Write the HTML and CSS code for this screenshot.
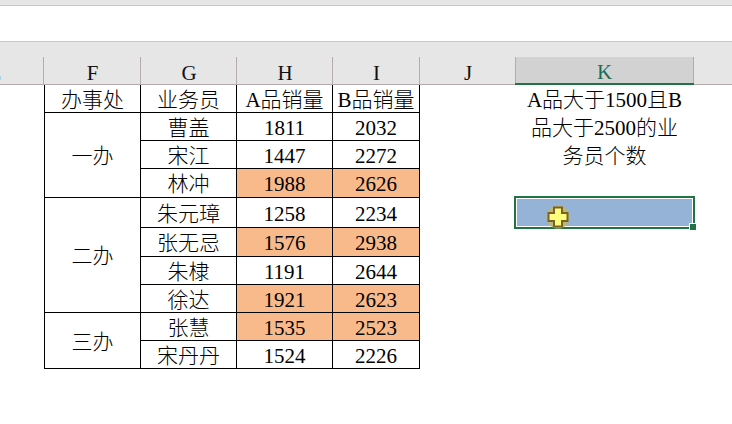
FILE: index.html
```html
<!DOCTYPE html>
<html lang="zh-CN">
<head>
<meta charset="utf-8">
<title>Sheet</title>
<link rel="stylesheet" href="styles.css">
</head>
<body>
<div class="topstrip"></div>
<div class="formula"></div>
<div class="sheet">
  <div class="hd hd-cut"><span>E</span></div>
  <div class="hd">F</div>
  <div class="hd">G</div>
  <div class="hd">H</div>
  <div class="hd">I</div>
  <div class="hd">J</div>
  <div class="hd hd-sel">K</div>
  <div class="hd-rest"></div>

  <div class="c cf">办事处</div><div class="c cg">业务员</div><div class="c ch">A品销量</div><div class="c ci">B品销量</div>
  <div class="note">A品大于1500且B<br>品大于2500的业<br>务员个数</div>

  <div class="c cf span3">一办</div><div class="c cg">曹盖</div><div class="c ch">1811</div><div class="c ci">2032</div>
  <div class="c cg">宋江</div><div class="c ch">1447</div><div class="c ci">2272</div>
  <div class="c cg">林冲</div><div class="c ch hi">1988</div><div class="c ci hi">2626</div>

  <div class="c cf span4">二办</div><div class="c cg">朱元璋</div><div class="c ch">1258</div><div class="c ci">2234</div>
  <div class="sel">
    <span class="handle"></span>
    <svg class="cursor" width="24" height="24" viewBox="0 0 24 24" aria-hidden="true">
      <circle cx="12" cy="12" r="11.5" fill="#bdb95f" fill-opacity=".9"/>
      <path d="M8 2.500h8v5.500h5.500v8h-5.500v5.500h-8v-5.500h-5.500v-8h5.500z" fill="#ffff7d" stroke="#7d5f2d" stroke-width="2"/>
    </svg>
  </div>
  <div class="c cg">张无忌</div><div class="c ch hi">1576</div><div class="c ci hi">2938</div>
  <div class="c cg">朱棣</div><div class="c ch">1191</div><div class="c ci">2644</div>
  <div class="c cg">徐达</div><div class="c ch hi">1921</div><div class="c ci hi">2623</div>

  <div class="c cf span2">三办</div><div class="c cg">张慧</div><div class="c ch hi">1535</div><div class="c ci hi">2523</div>
  <div class="c cg">宋丹丹</div><div class="c ch">1524</div><div class="c ci">2226</div>
</div>
</body>
</html>
```
FILE: styles.css
```css
* { box-sizing: border-box; }
html, body { margin: 0; height: 424px; overflow: hidden; background: #fff; }
body {
  width: 732px;
  font-family: "Liberation Serif", "Noto Sans CJK SC", serif;
  font-size: 21px;
  font-weight: 300;
  color: #000;
}
.topstrip { height: 6px; background: #e6e6e6; border-bottom: 1px solid #c8c8c8; }
.formula { height: 36px; background: #fff; border-bottom: 1px solid #c8c8c8; }
.sheet {
  display: grid;
  grid-template-columns: 44px 97px 96px 96px 87px 96px 178px 38px;
  grid-template-rows: 43px repeat(3, 28px) 29px 30px 29px repeat(4, 28px);
  position: relative;
}
.hd, .hd-rest {
  background: #e6e6e6;
  border-bottom: 1px solid #b4acac;
}
.hd {
  display: flex;
  align-items: flex-end;
  justify-content: center;
  line-height: 21px;
  font-size: 21px;
  color: #111;
  background-image: linear-gradient(#b4acac, #b4acac);
  background-repeat: no-repeat;
  background-size: 1px 27px;
  background-position: right bottom;
}
.hd-cut { justify-content: flex-end; padding-right: 43px; }
.hd-cut span { display: block; }
.hd-sel {
  background-color: #d2d2d2;
  background-image: linear-gradient(#e6e6e6, #e6e6e6), linear-gradient(#b4acac, #b4acac), linear-gradient(#b4acac, #b4acac);
  background-size: 100% 15px, 1px 27px, 1px 27px;
  background-position: left top, right bottom, left bottom;
  border-bottom: 2px solid #217346;
  color: #1d6b52;
  margin-left: -1px;
}
.c {
  display: flex;
  align-items: center;
  justify-content: center;
  border-right: 1px solid #000;
  border-bottom: 1px solid #000;
  line-height: 27px;
  padding-top: 3px;
  white-space: nowrap;
}
.cf { grid-column: 2; border-left: 1px solid #000; }
.cg { grid-column: 3; }
.ch { grid-column: 4; }
.ci { grid-column: 5; }
.span3 { grid-row: span 3; }
.span4 { grid-row: span 4; }
.span2 { grid-row: span 2; }
.hi { background: #f8ba8b; }
.note {
  grid-column: 7;
  grid-row: 2 / span 3;
  text-align: center;
  line-height: 28px;
  padding-top: 1px;
  white-space: nowrap;
  margin-left: -1px;
}
.sel {
  grid-column: 7;
  grid-row: 6;
  position: relative;
  margin: -2px -1px -1px -2px;
  border: 2px solid #217346;
  background: #95b3d7;
  box-shadow: inset 0 0 0 1px #fff;
}
.handle {
  position: absolute;
  right: -3px;
  bottom: -3px;
  width: 7px;
  height: 7px;
  background: #217346;
  border: 1px solid #fff;
  border-width: 1px 0 0 1px;
}
.cursor { position: absolute; left: 30px; top: 7px; }
```
